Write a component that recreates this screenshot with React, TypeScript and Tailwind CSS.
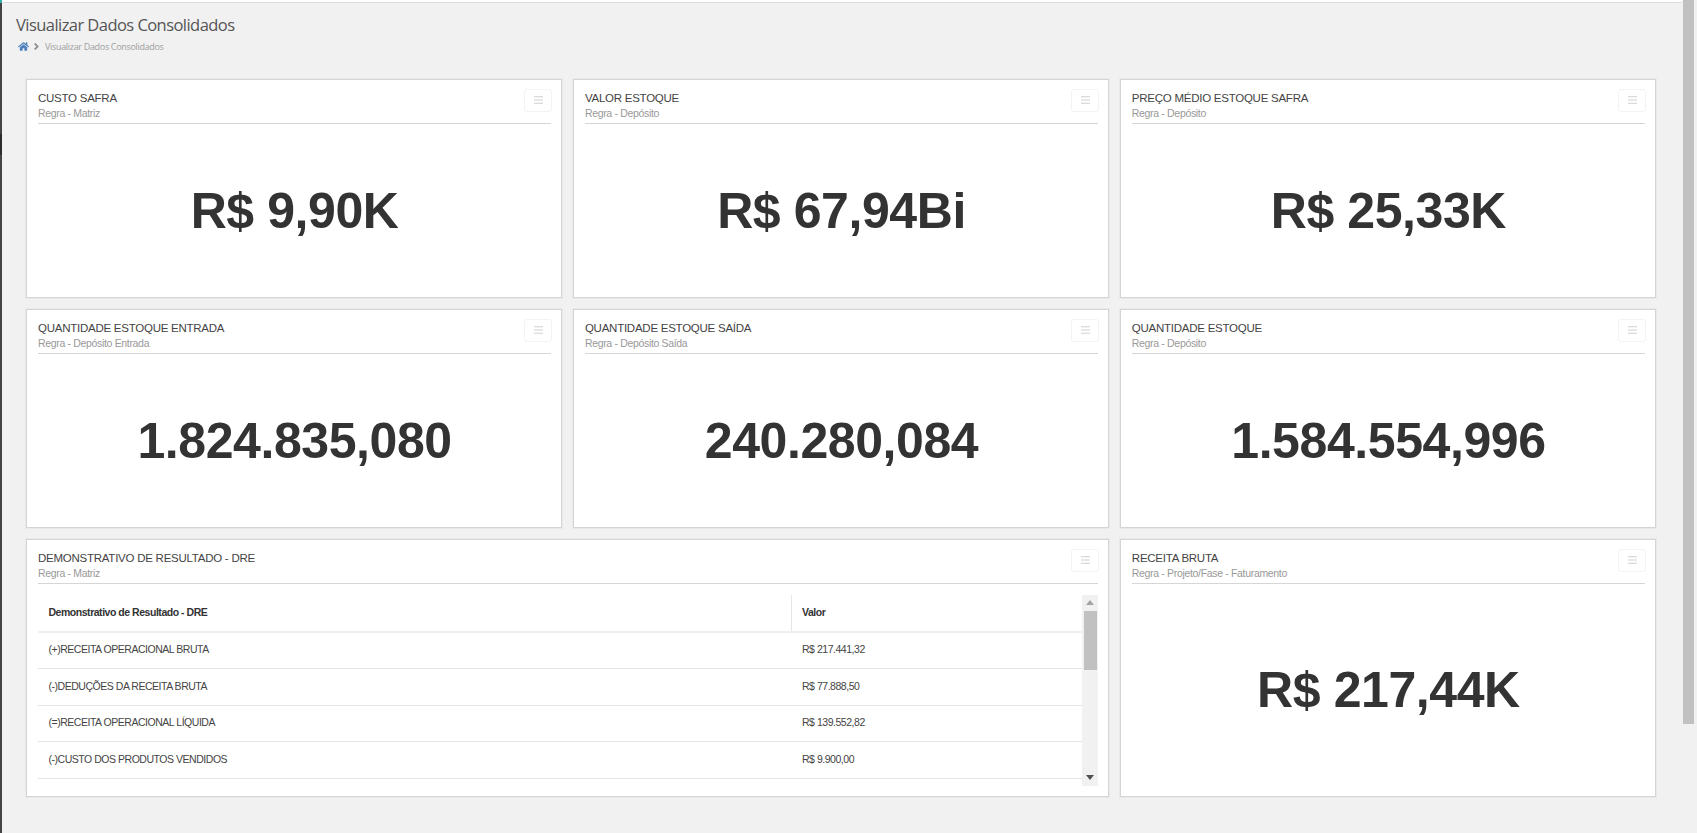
import React from 'react';
import { FaHome, FaAngleRight } from 'react-icons/fa';

const MenuButton = () => (
    <button type="button" className="flex h-[23px] w-[28px] items-center justify-center rounded-[3px] border border-[#f3f3f3] bg-white">
        <svg width="9" height="8" viewBox="0 0 9 8">
            <path d="M0 .75h9M0 4h9M0 7.25h9" stroke="#cfcfcf" strokeWidth="1.2" />
        </svg>
    </button>
);

const CardHeader = ({ title, rule }: { title: string; rule: string }) => (
    <div className="flex h-[34px] items-start justify-between border-b border-[#d6d6d6]">
        <div>
            <div className="text-[11.5px] leading-[17px] tracking-[-0.25px] text-[#444]">{title}</div>
            <div className="text-[10.5px] leading-[13px] tracking-[-0.33px] text-[#999]">{rule}</div>
        </div>
        <div className="mr-[-1px] mt-[-1px]">
            <MenuButton />
        </div>
    </div>
);

const Card = ({ title, rule, value }: { title: string; rule: string; value: string }) => (
    <div className="flex flex-col border border-[#d5d5d5] bg-white pl-[11px] pr-[10px] pt-[10px] shadow-[0_0_0_1px_#e9e9e9]">
        <CardHeader title={title} rule={rule} />
        <div className="flex flex-1 items-center justify-center pt-[2px] text-[50px] font-bold tracking-[-0.42px] text-[#333]">
            {value}
        </div>
    </div>
);

const dreRows = [
    ['(+)RECEITA OPERACIONAL BRUTA', 'R$ 217.441,32'],
    ['(-)DEDUÇÕES DA RECEITA BRUTA', 'R$ 77.888,50'],
    ['(=)RECEITA OPERACIONAL LÍQUIDA', 'R$ 139.552,82'],
    ['(-)CUSTO DOS PRODUTOS VENDIDOS', 'R$ 9.900,00'],
];

const DreCard = () => (
    <div className="col-span-2 flex flex-col border border-[#d5d5d5] bg-white pl-[11px] pr-[10px] pt-[10px] shadow-[0_0_0_1px_#e9e9e9]">
        <CardHeader title="DEMONSTRATIVO DE RESULTADO - DRE" rule="Regra - Matriz" />
        <div className="mt-[11px] flex h-[191px]">
            <div className="flex-1 text-[10.5px] tracking-[-0.47px]">
                <div className="flex h-[38px] border-b-2 border-[#efefef] font-bold text-[#333]">
                    <div className="flex w-[754px] items-center border-r border-[#e6e6e6] pl-[10.5px]">Demonstrativo de Resultado - DRE</div>
                    <div className="flex items-center pl-[10px]">Valor</div>
                </div>
                {dreRows.map(([name, value]) => (
                    <div key={name} className="flex h-[36.5px] border-b border-[#e4e4e4] text-[#444]">
                        <div className="flex w-[754px] items-center pl-[10.5px]">{name}</div>
                        <div className="flex items-center pl-[10px]">{value}</div>
                    </div>
                ))}
            </div>
            <div className="flex w-[16px] flex-col items-center bg-[#f1f1f1]">
                <div className="flex h-[16px] items-center">
                    <div className="h-0 w-0 border-x-[4px] border-b-[5px] border-x-transparent border-b-[#a3a3a3]" />
                </div>
                <div className="h-[59px] w-[13px] bg-[#c1c1c1]" />
                <div className="flex-1" />
                <div className="flex h-[16px] items-center">
                    <div className="h-0 w-0 border-x-[4px] border-t-[5px] border-x-transparent border-t-[#505050]" />
                </div>
            </div>
        </div>
    </div>
);

const App: React.FC = () => {
    return (
        <div className="flex h-[833px] overflow-hidden bg-[#f1f1f1] font-['Liberation_Sans',Arial,sans-serif]">
            <div className="flex w-[2px] flex-col bg-[#444]">
                <div className="h-[3px] bg-[#2bb5a8]" />
                <div className="mt-[131px] h-[21px] bg-[#2c2c2c]" />
            </div>
            <div className="flex-1">
                <div className="h-[3px] border-t-2 border-white border-b border-b-[#dcdcdc]" />
                <div className="pl-[14px] pt-[12px] font-['Open_Sans',sans-serif]">
                    <h1 className="text-[16.5px] leading-[20px] tracking-[-0.55px] text-[#555]">Visualizar Dados Consolidados</h1>
                    <div className="mt-[5px] flex items-center pl-[2px] text-[9px] tracking-[-0.32px] text-[#a0a0a0]">
                        <FaHome className="text-[11px] text-[#4c80bd]" />
                        <FaAngleRight className="ml-[2px] text-[11px] text-[#8a8a8a]" />
                        <span className="ml-[3px]">Visualizar Dados Consolidados</span>
                    </div>
                </div>
                <div className="mt-[25px] ml-[24px] grid w-[1630px] grid-cols-3 grid-rows-[219px_219px_258px] gap-x-[10.75px] gap-y-[11px]">
                    <Card title="CUSTO SAFRA" rule="Regra - Matriz" value="R$ 9,90K" />
                    <Card title="VALOR ESTOQUE" rule="Regra - Depósito" value="R$ 67,94Bi" />
                    <Card title="PREÇO MÉDIO ESTOQUE SAFRA" rule="Regra - Depósito" value="R$ 25,33K" />
                    <Card title="QUANTIDADE ESTOQUE ENTRADA" rule="Regra - Depósito Entrada" value="1.824.835,080" />
                    <Card title="QUANTIDADE ESTOQUE SAÍDA" rule="Regra - Depósito Saída" value="240.280,084" />
                    <Card title="QUANTIDADE ESTOQUE" rule="Regra - Depósito" value="1.584.554,996" />
                    <DreCard />
                    <Card title="RECEITA BRUTA" rule="Regra - Projeto/Fase - Faturamento" value="R$ 217,44K" />
                </div>
            </div>
            <div className="w-[15px]">
                <div className="ml-[1px] h-[724px] w-[11px] bg-[#c1c1c1]" />
            </div>
        </div>
    );
};

export default App;
